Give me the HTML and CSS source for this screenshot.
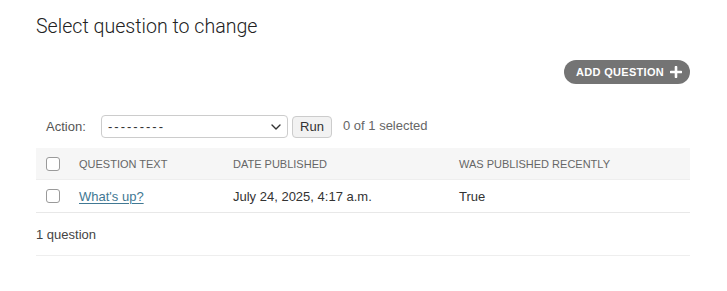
FILE: index.html
```html
<!DOCTYPE html>
<html lang="en">
<head>
<meta charset="utf-8">
<title>Select question to change</title>
<link rel="stylesheet" href="styles.css">
</head>
<body>
<div class="content">
  <h1 class="title">Select question to change</h1>
  <div class="tools">
    <a class="addlink" href="#">ADD QUESTION
      <svg class="plus" width="12" height="12" viewBox="0 0 12 12"><path d="M6 1v10M1 6h10" stroke="#fff" stroke-width="2.6" stroke-linecap="round"/></svg>
    </a>
  </div>
  <div class="actions">
    <label class="action-label">Action:</label>
    <span class="select-wrap">
      <select class="action-select"><option>---------</option></select>
      <svg class="chev" width="10" height="6" viewBox="0 0 10 6"><path d="M1 1l4 4 4-4" fill="none" stroke="#333" stroke-width="1.4" stroke-linecap="round" stroke-linejoin="round"/></svg>
    </span>
    <button class="run">Run</button>
    <span class="counter">0 of 1 selected</span>
  </div>
  <table class="result">
    <thead>
      <tr>
        <th class="col-check"><input type="checkbox" class="cb"></th>
        <th class="col-q">Question text</th>
        <th class="col-d">Date published</th>
        <th class="col-r">Was published recently</th>
      </tr>
    </thead>
    <tbody>
      <tr>
        <td class="col-check"><input type="checkbox" class="cb"></td>
        <th class="col-q cell-link"><a href="#">What's up?</a></th>
        <td class="col-d">July 24, 2025, 4:17 a.m.</td>
        <td class="col-r">True</td>
      </tr>
    </tbody>
  </table>
  <p class="paginator">1 question</p>
</div>
</body>
</html>
```
FILE: styles.css
```css
html, body {
  margin: 0;
  padding: 0;
  background: #fff;
}
body {
  font-family: "Liberation Sans", Arial, sans-serif;
  color: #333;
  font-size: 13px;
}
.content {
  padding: 15px 37px 0 36px;
}
.title {
  margin: 0;
  font-family: Roboto, "Liberation Sans", sans-serif;
  font-size: 19.6px;
  line-height: 24px;
  font-weight: 300;
  color: #222;
}
.tools {
  display: flex;
  justify-content: flex-end;
  margin-top: 21px;
}
.addlink {
  display: inline-flex;
  align-items: center;
  gap: 6px;
  height: 24px;
  padding: 0 8px 0 12px;
  border-radius: 12px;
  background: #747474;
  color: #fff;
  text-decoration: none;
  font-size: 11px;
  font-weight: 700;
  letter-spacing: 0.3px;
}
.plus {
  display: block;
}
.actions {
  display: flex;
  align-items: center;
  margin-top: 31px;
  padding: 0 10px;
  height: 23px;
}
.action-label {
  color: #555;
  font-size: 13px;
  width: 55px;
}
.select-wrap {
  position: relative;
  display: inline-block;
}
.action-select {
  appearance: none;
  -webkit-appearance: none;
  width: 187px;
  height: 23px;
  border: 1px solid #ccc;
  border-radius: 4px;
  background: #fff;
  font-family: inherit;
  font-size: 13px;
  letter-spacing: 2px;
  color: #333;
  padding: 0 6px;
  display: block;
}
.chev {
  position: absolute;
  right: 7px;
  top: 9px;
}
.run {
  margin-left: 4px;
  height: 22px;
  width: 40px;
  border: 1px solid #ccc;
  border-radius: 4px;
  background: #f2f2f2;
  font-family: inherit;
  font-size: 13px;
  color: #333;
  padding: 0;
}
.counter {
  margin-left: 11px;
  color: #666;
  font-size: 13px;
  position: relative;
  top: -1px;
}
.result {
  width: 100%;
  margin-top: 10px;
  border-collapse: collapse;
}
.result thead th {
  background: #f6f6f6;
  height: 31px;
  padding: 0;
  text-align: left;
  font-size: 11px;
  font-weight: 400;
  text-transform: uppercase;
  color: #666;
  letter-spacing: 0;
  border-bottom: 1px solid #eee;
}
.result tbody td, .result tbody th {
  height: 32px;
  padding: 0;
  text-align: left;
  font-size: 13px;
  font-weight: 400;
  color: #333;
  border-bottom: 1px solid #e8e8e8;
}
.col-check {
  width: 33px;
  padding-left: 10px !important;
}
.col-q {
  width: 154px;
}
.col-d {
  width: 226px;
}
.cb {
  appearance: none;
  -webkit-appearance: none;
  width: 14px;
  height: 14px;
  margin: 0;
  border: 1px solid #9a9a9a;
  border-radius: 3px;
  background: #fff;
  display: block;
}
.cell-link a {
  color: #417893;
  text-decoration: underline;
  text-underline-offset: 2px;
  font-weight: 400;
}
.paginator {
  margin: 0;
  padding: 11px 0 9px;
  line-height: 22px;
  font-size: 13px;
  color: #444;
  border-bottom: 1px solid #eee;
}
```
